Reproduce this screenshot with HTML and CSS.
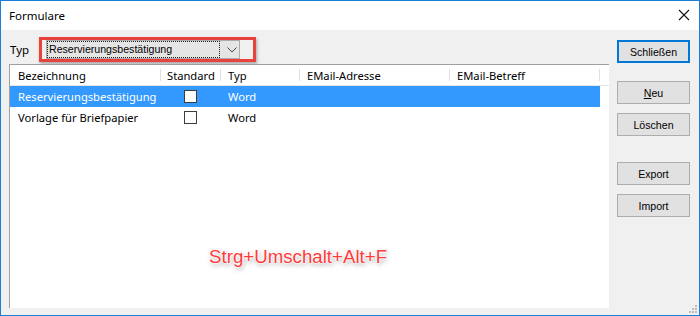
FILE: index.html
```html
<!DOCTYPE html>
<html lang="de">
<head>
    <meta charset="UTF-8">
    <title>Formulare</title>
    <link rel="stylesheet" href="styles.css">
</head>
<body>
    <div class="window">
        <!-- Titelleiste -->
        <div class="titlebar">
            <span class="title">Formulare</span>
            <svg class="close" width="12" height="12" viewBox="0 0 12 12">
                <path d="M1 1 L11 11 M11 1 L1 11" stroke="#111" stroke-width="1.1" fill="none"/>
            </svg>
        </div>

        <div class="content">
            <div class="main">
                <!-- Typ-Auswahl -->
                <div class="type-row">
                    <span class="type-label">Typ</span>
                    <div class="highlight">
                        <div class="combo">
                            <span class="combo-text">Reservierungsbestätigung</span>
                            <svg class="chevron" width="10" height="6" viewBox="0 0 10 6">
                                <path d="M0.5 0.5 L5 5 L9.5 0.5" stroke="#444" stroke-width="1" fill="none"/>
                            </svg>
                        </div>
                    </div>
                </div>

                <!-- Liste -->
                <div class="listview">
                    <div class="lv-header">
                        <div class="cell c1">Bezeichnung</div>
                        <div class="cell c2">Standard</div>
                        <div class="cell c3">Typ</div>
                        <div class="cell c4">EMail-Adresse</div>
                        <div class="cell c5">EMail-Betreff</div>
                    </div>
                    <div class="lv-row selected">
                        <div class="cell c1">Reservierungsbestätigung</div>
                        <div class="cell c2"><span class="checkbox"></span></div>
                        <div class="cell c3">Word</div>
                        <div class="cell c4"></div>
                        <div class="cell c5"></div>
                    </div>
                    <div class="lv-row">
                        <div class="cell c1">Vorlage für Briefpapier</div>
                        <div class="cell c2"><span class="checkbox"></span></div>
                        <div class="cell c3">Word</div>
                        <div class="cell c4"></div>
                        <div class="cell c5"></div>
                    </div>
                </div>
            </div>

            <!-- Schaltflächen -->
            <div class="buttons">
                <button class="btn default">Schließen</button>
                <button class="btn gap-l"><u>N</u>eu</button>
                <button class="btn gap-s">Löschen</button>
                <button class="btn gap-xl">Export</button>
                <button class="btn gap-s">Import</button>
            </div>
        </div>

        <div class="shortcut">Strg+Umschalt+Alt+F</div>

        <svg class="grip" width="10" height="10" viewBox="0 0 10 10">
            <rect x="7" y="1" width="2" height="2" fill="#bdbdbd"/>
            <rect x="4" y="4" width="2" height="2" fill="#bdbdbd"/>
            <rect x="7" y="4" width="2" height="2" fill="#bdbdbd"/>
            <rect x="1" y="7" width="2" height="2" fill="#bdbdbd"/>
            <rect x="4" y="7" width="2" height="2" fill="#bdbdbd"/>
            <rect x="7" y="7" width="2" height="2" fill="#bdbdbd"/>
        </svg>
    </div>
</body>
</html>
```

FILE: styles.css
```css
/* Dialog "Formulare" */
body {
    margin: 0;
    background: #fff;
    font-family: "Noto Sans", "Liberation Sans", sans-serif;
    font-size: 11.2px;
    color: #000;
}

.window {
    position: relative;
    width: 700px;
    height: 316px;
    box-sizing: border-box;
    border: 1px solid #1c7fd6;
    background: #f0f0f0;
    display: flex;
    flex-direction: column;
    overflow: hidden;
}

/* Titelleiste */
.titlebar {
    height: 29px;
    flex: none;
    background: #fff;
    display: flex;
    align-items: center;
    justify-content: space-between;
    padding: 0 9px 0 8px;
}

.title {
    font-size: 11.5px;
    margin-top: -1px;
}

.close {
    display: block;
    margin-top: -1px;
}

/* Inhalt */
.content {
    flex: 1;
    display: flex;
    padding-left: 8px;
}

.main {
    width: 600px;
    display: flex;
    flex-direction: column;
}

.type-row {
    display: flex;
    align-items: center;
    margin-top: 7px;
    height: 25px;
}

.type-label {
    width: 30px;
    padding-left: 1px;
    box-sizing: border-box;
    font-size: 11.5px;
}

.highlight {
    width: 217px;
    height: 25px;
    box-sizing: border-box;
    border: 3px solid #e8423f;
    padding-left: 4px;
    box-shadow: 1px 2px 3px rgba(0, 0, 0, 0.3);
    display: flex;
    align-items: center;
}

.combo {
    width: 194px;
    height: 19px;
    box-sizing: border-box;
    background: #e5e5e5;
    border: 1px solid #acacac;
    display: flex;
    align-items: center;
}

.combo-text {
    width: 173px;
    height: 17px;
    box-sizing: border-box;
    border: 1px dotted #222;
    padding-left: 1px;
    font-family: "Liberation Sans", Arial, sans-serif;
    font-size: 10.6px;
    line-height: 15px;
    white-space: nowrap;
}

.chevron {
    display: block;
    margin-left: 7px;
}

/* Listenansicht */
.listview {
    margin-top: 2px;
    height: 244px;
    box-sizing: border-box;
    background: #fff;
    border-top: 1px solid #a0a0a0;
    border-left: 1px solid #a0a0a0;
}

.lv-header {
    display: flex;
    height: 21px;
    box-sizing: border-box;
    background: #fff;
    border-bottom: 1px solid #e5e5e5;
}

.lv-header .cell {
    position: relative;
}

.lv-header .cell::after {
    content: "";
    position: absolute;
    right: 0;
    top: 4px;
    bottom: 4px;
    width: 1px;
    background: #e0e0e0;
}

.cell {
    box-sizing: border-box;
    padding-left: 7px;
    display: flex;
    align-items: center;
    white-space: nowrap;
    overflow: hidden;
}

.c1 { width: 151px; padding-left: 8px; }
.c2 { width: 60px; padding-left: 6px; }
.c3 { width: 79px; }
.c4 { width: 150px; }
.c5 { width: 150px; }

.lv-row {
    display: flex;
    width: 590px;
    height: 21px;
}

.lv-row.selected {
    background: #3399ff;
    color: #fff;
}

.lv-row .c2 {
    padding-left: 23px;
}

.checkbox {
    width: 13px;
    height: 13px;
    box-sizing: border-box;
    border: 1px solid #3c3c3c;
    background: #fdfdfd;
}

/* Schaltflächen */
.buttons {
    margin-left: 8px;
    padding-top: 10px;
    display: flex;
    flex-direction: column;
}

.btn {
    width: 73px;
    height: 23px;
    padding: 0;
    background: #e1e1e1;
    border: 1px solid #adadad;
    font-family: "Liberation Sans", Arial, sans-serif;
    font-size: 10.6px;
    color: #000;
}

.btn.default {
    border: 2px solid #0078d7;
}

.gap-s { margin-top: 9px; }
.gap-l { margin-top: 18px; }
.gap-xl { margin-top: 26px; }

/* Tastenkürzel-Hinweis */
.shortcut {
    position: absolute;
    left: 208px;
    top: 247px;
    font-family: "Liberation Sans", Arial, sans-serif;
    font-size: 18.7px;
    line-height: 1;
    color: #ff3b3b;
    text-shadow: 0 0 1px #fff, 0 0 2px #fff, 0 0 3px #fff, 0 0 3px #fff, 1px 2px 5px rgba(0, 0, 0, 0.45);
}

.grip {
    position: absolute;
    right: 1px;
    bottom: 1px;
}
```
